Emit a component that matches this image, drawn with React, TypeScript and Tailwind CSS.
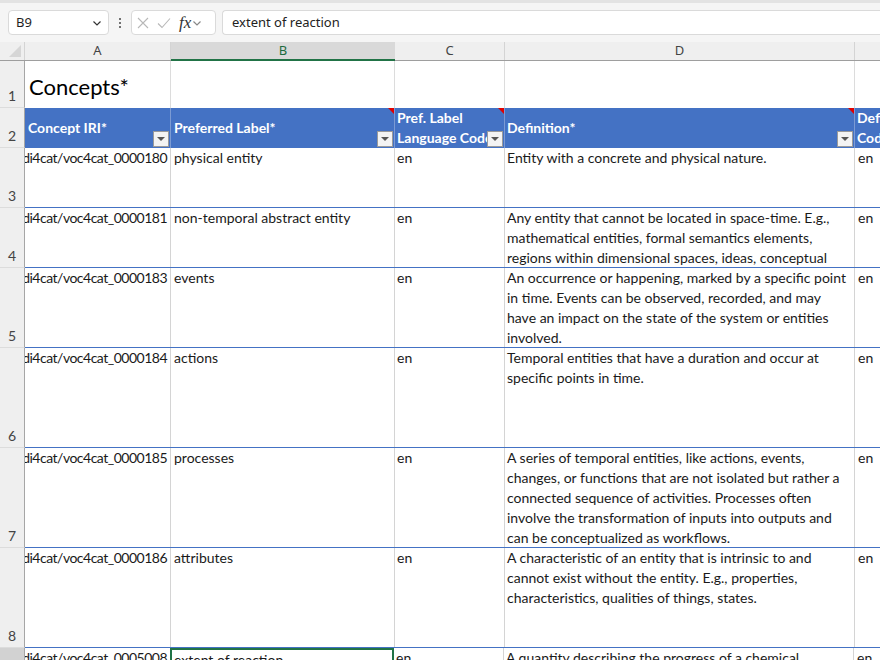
import React from "react";

// column widths (A..E) as full class names
const W = ["w-[146px]", "w-[224px]", "w-[110px]", "w-[350px]", "w-[120px]"];

type DataRow = {
    num: number;
    h: string;
    iri: string;
    label: string;
    def: string[];
};

const rows: DataRow[] = [
    { num: 3, h: "h-[60px]", iri: "nfdi4cat/voc4cat_0000180", label: "physical entity", def: ["Entity with a concrete and physical nature."] },
    {
        num: 4, h: "h-[60px]", iri: "nfdi4cat/voc4cat_0000181", label: "non-temporal abstract entity",
        def: [
            "Any entity that cannot be located in space-time. E.g.,",
            "mathematical entities, formal semantics elements,",
            "regions within dimensional spaces, ideas, conceptual",
        ],
    },
    {
        num: 5, h: "h-[80px]", iri: "nfdi4cat/voc4cat_0000183", label: "events",
        def: [
            "An occurrence or happening, marked by a specific point",
            "in time. Events can be observed, recorded, and may",
            "have an impact on the state of the system or entities",
            "involved.",
        ],
    },
    {
        num: 6, h: "h-[100px]", iri: "nfdi4cat/voc4cat_0000184", label: "actions",
        def: ["Temporal entities that have a duration and occur at", "specific points in time."],
    },
    {
        num: 7, h: "h-[100px]", iri: "nfdi4cat/voc4cat_0000185", label: "processes",
        def: [
            "A series of temporal entities, like actions, events,",
            "changes, or functions that are not isolated but rather a",
            "connected sequence of activities. Processes often",
            "involve the transformation of inputs into outputs and",
            "can be conceptualized as workflows.",
        ],
    },
    {
        num: 8, h: "h-[100px]", iri: "nfdi4cat/voc4cat_0000186", label: "attributes",
        def: [
            "A characteristic of an entity that is intrinsic to and",
            "cannot exist without the entity. E.g., properties,",
            "characteristics, qualities of things, states.",
        ],
    },
];

const FilterButton = () => (
    <div className="absolute right-[1px] bottom-[1px] w-[16px] h-[16px] border border-[#9a9a9a] bg-[#f3f3f3] flex items-center justify-center">
        <svg width="8" height="5" viewBox="0 0 8 5">
            <path d="M0 0 L8 0 L4 4 Z" fill="#555" />
        </svg>
    </div>
);

const CommentMark = () => (
    <svg className="absolute right-0 top-0" width="6" height="6" viewBox="0 0 6 6">
        <path d="M0 0 L6 0 L6 6 Z" fill="#e00000" />
    </svg>
);

const Chevron = ({ color = "#333" }: { color?: string }) => (
    <svg width="10" height="10" viewBox="0 0 10 10">
        <path d="M1.5 3.5 L5 7 L8.5 3.5" stroke={color} strokeWidth="1.2" fill="none" />
    </svg>
);

const RowHeader = ({ num, selected = false }: { num: number; selected?: boolean }) => (
    <div
        className={`w-[25px] shrink-0 border-r border-r-[#a6a6a6] border-b border-b-[#dcdcdc] flex items-end justify-center pb-[1px] text-[14px] ${
            selected ? "bg-[#d2d2d2] text-[#1e6b3f]" : "bg-[#efefef] text-[#444]"
        }`}
    >
        {num}
    </div>
);

export default function App() {
    return (
        <div className="w-[880px] h-[660px] overflow-hidden bg-white font-[Lato,'Open_Sans',sans-serif]">
            {/* Formula bar */}
            <div className="h-[42px] bg-[#f5f5f5] border-t-[3px] border-t-[#e3e3e3] flex items-center pl-[8px] font-['Noto_Sans',sans-serif]">
                <div className="w-[101px] h-[25px] bg-white border border-[#dadada] rounded-[4px] flex items-center justify-between pl-[7px] pr-[6px] text-[13px] text-[#1f1f1f]">
                    <span>B9</span>
                    <Chevron />
                </div>
                <div className="w-[22px] flex flex-col items-center gap-[2px]">
                    <span className="w-[2px] h-[2px] bg-[#444] rounded-full" />
                    <span className="w-[2px] h-[2px] bg-[#444] rounded-full" />
                    <span className="w-[2px] h-[2px] bg-[#444] rounded-full" />
                </div>
                <div className="w-[85px] h-[25px] bg-white border border-[#dadada] rounded-[4px] flex items-center pl-[5px] gap-[8px]">
                    <svg width="12" height="12" viewBox="0 0 12 12">
                        <path d="M1 1 L11 11 M11 1 L1 11" stroke="#b8b8b8" strokeWidth="1.1" />
                    </svg>
                    <svg width="14" height="12" viewBox="0 0 14 12">
                        <path d="M1 6.5 L5 10.5 L13 1.5" stroke="#b8b8b8" strokeWidth="1.1" fill="none" />
                    </svg>
                    <div className="flex items-center gap-[1px]">
                        <span className="text-[17px] italic text-[#333] leading-none font-['Liberation_Serif',serif]">fx</span>
                        <Chevron color="#888" />
                    </div>
                </div>
                <div className="ml-[6px] flex-1 h-[25px] bg-white border border-[#dadada] border-r-0 rounded-l-[4px] flex items-center pl-[9px] text-[13px] text-[#222]">
                    extent of reaction
                </div>
            </div>

            {/* Column headers */}
            <div className="flex h-[19px] bg-[#efefef] border-b border-b-[#9e9e9e] text-[13px] text-[#444] font-['Noto_Sans',sans-serif]">
                <div className="w-[25px] shrink-0 border-r border-r-[#d4d4d4] relative">
                    <svg className="absolute right-[3px] bottom-[3px]" width="12" height="12" viewBox="0 0 12 12">
                        <path d="M12 0 L12 12 L0 12 Z" fill="#d6d6d6" />
                    </svg>
                </div>
                <div className={`${W[0]} shrink-0 flex items-center justify-center border-r border-r-[#d4d4d4]`}>A</div>
                <div className={`${W[1]} shrink-0 flex items-center justify-center bg-[#d9d9d9] text-[#1e6b3f] border-b-2 border-b-[#217346] -mb-[1px]`}>B</div>
                <div className={`${W[2]} shrink-0 flex items-center justify-center border-r border-r-[#d4d4d4]`}>C</div>
                <div className={`${W[3]} shrink-0 flex items-center justify-center border-r border-r-[#d4d4d4]`}>D</div>
                <div className={`${W[4]} shrink-0`} />
            </div>

            {/* Row 1 */}
            <div className="flex h-[47px]">
                <RowHeader num={1} />
                <div className={`${W[0]} shrink-0 border-r border-r-[#dcdcdc] flex items-end pl-[4px] pb-[10px] text-[22px] text-black leading-none whitespace-nowrap`}>
                    Concepts*
                </div>
                <div className={`${W[1]} shrink-0 border-r border-r-[#dcdcdc]`} />
                <div className={`${W[2]} shrink-0 border-r border-r-[#dcdcdc]`} />
                <div className={`${W[3]} shrink-0 border-r border-r-[#dcdcdc]`} />
                <div className={`${W[4]} shrink-0`} />
            </div>

            {/* Row 2: table header */}
            <div className="flex h-[40px]">
                <RowHeader num={2} />
                <div className="flex bg-[#4472c4] text-white font-bold text-[14px] leading-[20px]">
                    <div className={`${W[0]} shrink-0 relative flex items-center pl-[3px] border-r border-r-[#7c9bd3] whitespace-nowrap overflow-hidden`}>
                        Concept IRI*
                        <FilterButton />
                    </div>
                    <div className={`${W[1]} shrink-0 relative flex items-center pl-[3px] border-r border-r-[#7c9bd3] whitespace-nowrap overflow-hidden`}>
                        Preferred Label*
                        <FilterButton />
                        <CommentMark />
                    </div>
                    <div className={`${W[2]} shrink-0 relative flex flex-col justify-center pl-[2px] border-r border-r-[#7c9bd3] whitespace-nowrap overflow-hidden`}>
                        <span>Pref. Label</span>
                        <span>Language Code</span>
                        <FilterButton />
                        <CommentMark />
                    </div>
                    <div className={`${W[3]} shrink-0 relative flex items-center pl-[2px] border-r border-r-[#7c9bd3] whitespace-nowrap overflow-hidden`}>
                        Definition*
                        <FilterButton />
                        <CommentMark />
                    </div>
                    <div className={`${W[4]} shrink-0 relative flex flex-col justify-center pl-[2px] whitespace-nowrap overflow-hidden`}>
                        <span>Definition Language</span>
                        <span>Code</span>
                    </div>
                </div>
            </div>

            {/* Data rows */}
            {rows.map((r) => (
                <div key={r.num} className={`flex ${r.h}`}>
                    <RowHeader num={r.num} />
                    <div className="flex border-b border-b-[#4472c4] text-[14px] leading-[20px] text-[#1a1a1a]">
                        <div className={`${W[0]} shrink-0 flex justify-end pr-[3px] border-r border-r-[#d4d4d4] overflow-hidden whitespace-nowrap tracking-[-0.5px]`}>
                            <span>{r.iri}</span>
                        </div>
                        <div className={`${W[1]} shrink-0 pl-[3px] border-r border-r-[#d4d4d4] overflow-hidden whitespace-nowrap`}>
                            {r.label}
                        </div>
                        <div className={`${W[2]} shrink-0 pl-[2px] border-r border-r-[#d4d4d4] overflow-hidden whitespace-nowrap`}>
                            en
                        </div>
                        <div className={`${W[3]} shrink-0 pl-[2px] border-r border-r-[#d4d4d4] overflow-hidden whitespace-nowrap flex flex-col`}>
                            {r.def.map((line, i) => (
                                <span key={i}>{line}</span>
                            ))}
                        </div>
                        <div className={`${W[4]} shrink-0 pl-[3px] overflow-hidden whitespace-nowrap`}>
                            en
                        </div>
                    </div>
                </div>
            ))}

            {/* Row 9 (selected) */}
            <div className="flex h-[60px]">
                <RowHeader num={9} selected />
                <div className="flex text-[14px] leading-[20px] text-[#1a1a1a]">
                    <div className={`${W[0]} shrink-0 flex justify-end pr-[3px] border-r border-r-[#d4d4d4] overflow-hidden whitespace-nowrap tracking-[-0.5px]`}>
                        <span>nfdi4cat/voc4cat_0005008</span>
                    </div>
                    <div className={`${W[1]} shrink-0 pl-[2px] border-2 border-[#217346] -ml-[1px] overflow-hidden whitespace-nowrap`}>
                        extent of reaction
                    </div>
                    <div className={`${W[2]} shrink-0 pl-[2px] border-r border-r-[#d4d4d4] overflow-hidden whitespace-nowrap`}>
                        en
                    </div>
                    <div className={`${W[3]} shrink-0 pl-[2px] border-r border-r-[#d4d4d4] overflow-hidden whitespace-nowrap`}>
                        A quantity describing the progress of a chemical
                    </div>
                    <div className={`${W[4]} shrink-0 pl-[3px] overflow-hidden whitespace-nowrap`}>
                        en
                    </div>
                </div>
            </div>
        </div>
    );
}
